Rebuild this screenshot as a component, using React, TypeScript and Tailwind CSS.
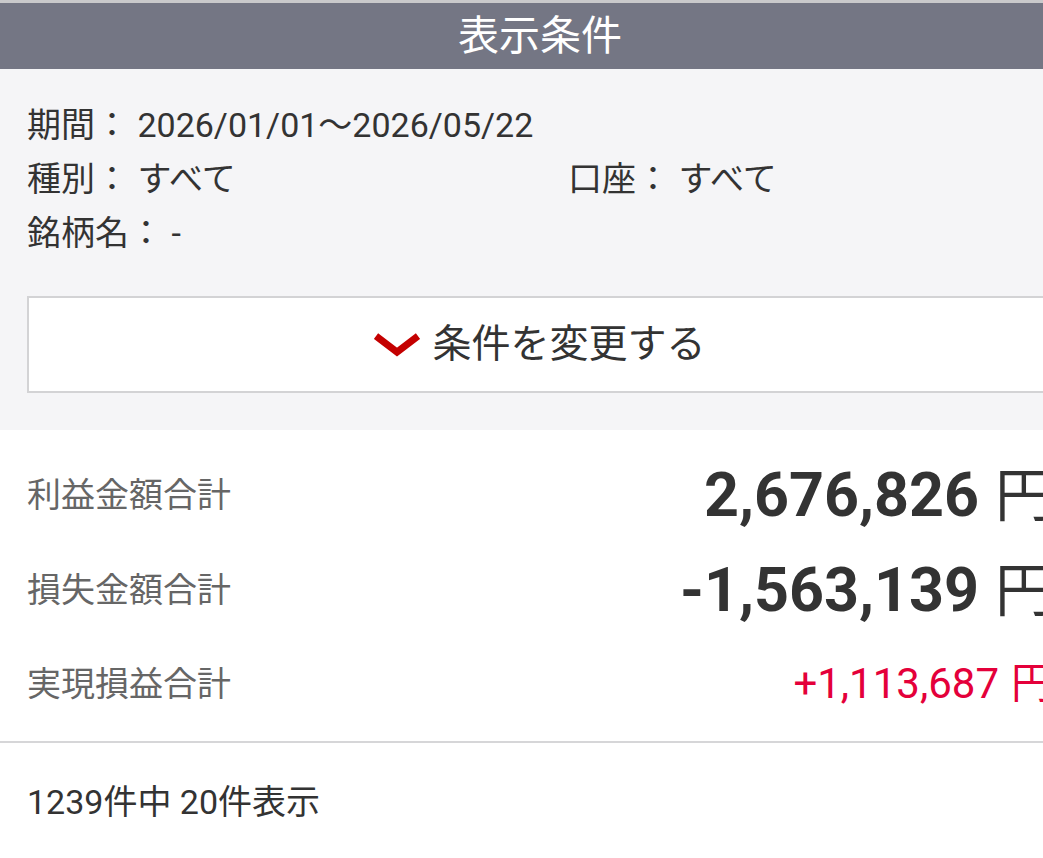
import React from "react";

const font = { fontFamily: "Roboto, 'Noto Sans CJK JP', sans-serif" };

export default function App() {
  return (
    <div className="w-[1043px] h-[858px] overflow-hidden bg-white">
      <div className="w-[1080px] text-[#333333]" style={font}>
        <div className="h-[3px] bg-[#c9c9cb]" />
        <div className="h-[66px] bg-[#747684] flex items-center justify-center text-white text-[41px] leading-none">
          表示条件
        </div>
        <div className="bg-[#f5f5f7] px-[27px] pt-[29px] pb-[37px]">
          <div className="text-[34px] leading-[54px]">
            <div>期間： 2026/01/01〜2026/05/22</div>
            <div className="flex">
              <div className="w-[541px]">種別： すべて</div>
              <div>口座： すべて</div>
            </div>
            <div>銘柄名： -</div>
          </div>
          <div className="mt-[36px] h-[97px] border-2 border-[#d3d3d5] bg-white flex items-center justify-center gap-[12px]">
            <svg width="46" height="24" viewBox="0 0 46 24">
              <polyline points="2,3 23,19 44,3" fill="none" stroke="#c40000" strokeWidth="7" />
            </svg>
            <span className="text-[39px] leading-none">条件を変更する</span>
          </div>
        </div>
        <div className="px-[27px] pt-[18px] pb-[11px] border-b-2 border-[#d6d6d8]">
          <div className="h-[95px] flex items-center justify-between">
            <span className="text-[34px] text-[#666666]">利益金額合計</span>
            <span className="flex items-baseline">
              <span className="text-[61px] font-bold leading-none">2,676,826</span>
              <span className="text-[58px] leading-none ml-[16px]">円</span>
            </span>
          </div>
          <div className="h-[95px] flex items-center justify-between">
            <span className="text-[34px] text-[#666666]">損失金額合計</span>
            <span className="flex items-baseline">
              <span className="text-[61px] font-bold leading-none">-1,563,139</span>
              <span className="text-[58px] leading-none ml-[16px]">円</span>
            </span>
          </div>
          <div className="h-[92px] flex items-center justify-between">
            <span className="text-[34px] text-[#666666]">実現損益合計</span>
            <span className="flex items-baseline text-[#e4003a]">
              <span className="text-[42px] leading-none">+1,113,687</span>
              <span className="text-[42px] leading-none ml-[12px]">円</span>
            </span>
          </div>
        </div>
        <div className="px-[27px] pt-[39px] text-[34px] leading-[40px]">1239件中 20件表示</div>
      </div>
    </div>
  );
}
